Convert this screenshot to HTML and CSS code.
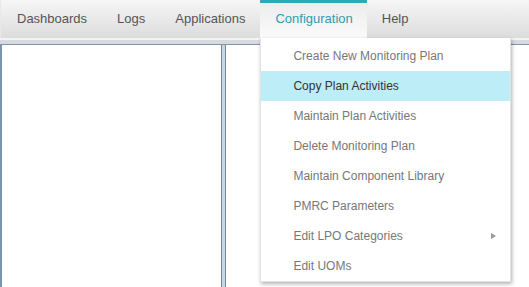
FILE: index.html
```html
<!DOCTYPE html>
<html lang="en">
<head>
    <meta charset="UTF-8">
    <meta name="viewport" content="width=device-width, initial-scale=1.0">
    <title>Monitoring Plans</title>
    <link rel="stylesheet" href="styles.css">
</head>
<body>
    <div class="topbar">
        <div class="nav-item">Dashboards</div>
        <div class="nav-item">Logs</div>
        <div class="nav-item">Applications</div>
        <div class="nav-item active">
            Configuration
            <ul class="dropdown">
                <li>Create New Monitoring Plan</li>
                <li class="hover">Copy Plan Activities</li>
                <li>Maintain Plan Activities</li>
                <li>Delete Monitoring Plan</li>
                <li>Maintain Component Library</li>
                <li>PMRC Parameters</li>
                <li class="has-sub">Edit LPO Categories</li>
                <li>Edit UOMs</li>
            </ul>
        </div>
        <div class="nav-item">Help</div>
    </div>
    <div class="panel-header"></div>
    <div class="workspace">
        <div class="left-panel"></div>
        <div class="splitter"></div>
        <div class="right-panel"></div>
    </div>
</body>
</html>
```

FILE: styles.css
```css
html, body {
    height: 100%;
}
body {
    margin: 0;
    font-family: "Liberation Sans", Arial, sans-serif;
    background-color: #fff;
    display: flex;
    flex-direction: column;
    overflow: hidden;
}
.topbar {
    height: 38px;
    display: flex;
    padding-left: 1px;
    background: linear-gradient(#f6f6f6, #dcdcdc); /* grey toolbar */
    border-left: 1px solid #e8e8e8;
    position: relative;
    z-index: 2;
}
.nav-item {
    padding: 0 15px;
    line-height: 38px;
    font-size: 13px;
    color: #555;
    position: relative;
    cursor: pointer;
}
.nav-item.active {
    padding-right: 14px;
    color: #2b9db2;
    background: linear-gradient(#ececec, #fafafa);
    box-shadow: inset 0 3px #2ea8ba; /* teal marker on the open tab */
}
.dropdown {
    position: absolute;
    top: 38px;
    left: 0;
    width: 249px;
    margin: 0;
    padding: 3px 0 0;
    list-style: none;
    background-color: #fff;
    border: 1px solid #e2e2e2;
    border-top: none;
    box-shadow: 1px 2px 4px rgba(0, 0, 0, 0.3);
}
.dropdown li {
    height: 30px;
    line-height: 30px;
    padding-left: 32px;
    font-size: 12px;
    color: #777;
    position: relative;
}
.dropdown li.hover {
    background-color: #bdedf7;
    color: #333;
}
.dropdown li.has-sub::after {
    content: "";
    position: absolute;
    right: 14px;
    top: 12px;
    border-left: 5px solid #999;
    border-top: 3px solid transparent;
    border-bottom: 3px solid transparent;
}
.panel-header {
    height: 4px;
    border-top: 2px solid #f3f3f3;
    background-color: #d7dbe0;
    border-bottom: 1px solid #7f93aa;
}
.workspace {
    flex: 1;
    display: flex;
}
.left-panel {
    width: 219px;
    border-left: 2px solid #7b93ad;
    background-color: #fff;
}
.splitter {
    width: 3px;
    background-color: #c9d6e4;
    border-left: 1px solid #71859c;
    border-right: 1px solid #71859c;
}
.right-panel {
    flex: 1;
    background-color: #fff;
}
```
